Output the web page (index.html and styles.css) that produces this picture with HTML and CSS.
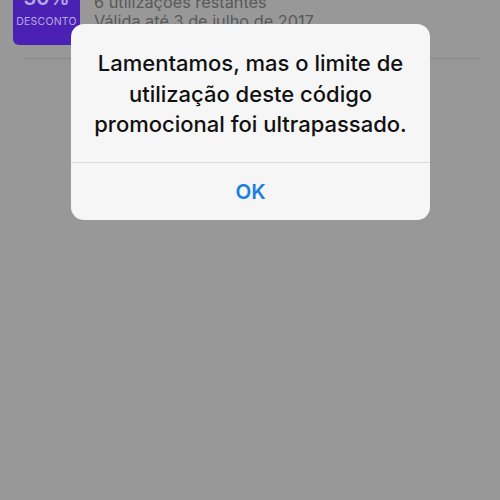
FILE: index.html
```html
<!DOCTYPE html>
<html>
<head>
  <title>Código promocional</title>
  <link rel="stylesheet" href="styles.css">
</head>
<body>
  <div class="screen">
    <div class="coupon">
      <div class="badge">
        <span class="badge-value">30%</span>
        <span class="badge-label">DESCONTO</span>
      </div>
      <div class="coupon-info">
        <p class="uses">6 utilizações restantes</p>
        <p class="valid">Válida até 3 de julho de 2017</p>
      </div>
    </div>
    <hr class="divider">
  </div>

  <div class="alert">
    <p class="alert-message">Lamentamos, mas o limite de utilização deste código promocional foi ultrapassado.</p>
    <button class="alert-button">OK</button>
  </div>
</body>
</html>
```

FILE: styles.css
```css
/* Ecrã escurecido por trás do alerta */
body {
  margin: 0;
  background-color: #989898;
  font-family: Inter, "Noto Sans", sans-serif;
}

.screen {
  height: 500px;
  overflow: hidden;
}

.coupon {
  display: flex;
  gap: 14px;
  margin-top: -18px;
  padding-left: 13px;
}

.badge {
  width: 67px;
  height: 63px;
  box-sizing: border-box;
  padding-bottom: 16px;
  background-color: #4b21b4;
  border-radius: 6px;
  display: flex;
  flex-direction: column;
  align-items: center;
  justify-content: flex-end;
  color: #b9a8e6;
}

.badge-value {
  font-size: 20px;
  font-weight: 600;
  line-height: 22px;
  margin-bottom: 6px;
}

.badge-label {
  font-size: 10.5px;
  letter-spacing: 0.2px;
  line-height: 14px;
}

.coupon-info p {
  margin: 0;
  color: #595959;
  font-size: 16.3px;
  line-height: 19px;
}

.coupon-info .uses {
  margin-top: 11px;
}

.divider {
  border: none;
  border-top: 1px solid #888;
  margin: 13px 20px 0 24px;
}

.alert {
  position: absolute;
  top: 24px;
  left: 71px;
  width: 359px;
  background-color: #f6f6f6;
  border-radius: 13px;
  overflow: hidden;
  text-align: center;
}

.alert-message {
  margin: 0;
  padding: 24px 14px 22px;
  font-size: 22px;
  font-weight: 500;
  line-height: 30.5px;
  color: #111;
}

.alert-button {
  display: block;
  width: 100%;
  height: 58px;
  border: none;
  border-top: 1px solid #dcdcdc;
  background: none;
  font-family: inherit;
  font-size: 20.5px;
  font-weight: 600;
  color: #1c7fe0;
}
```
